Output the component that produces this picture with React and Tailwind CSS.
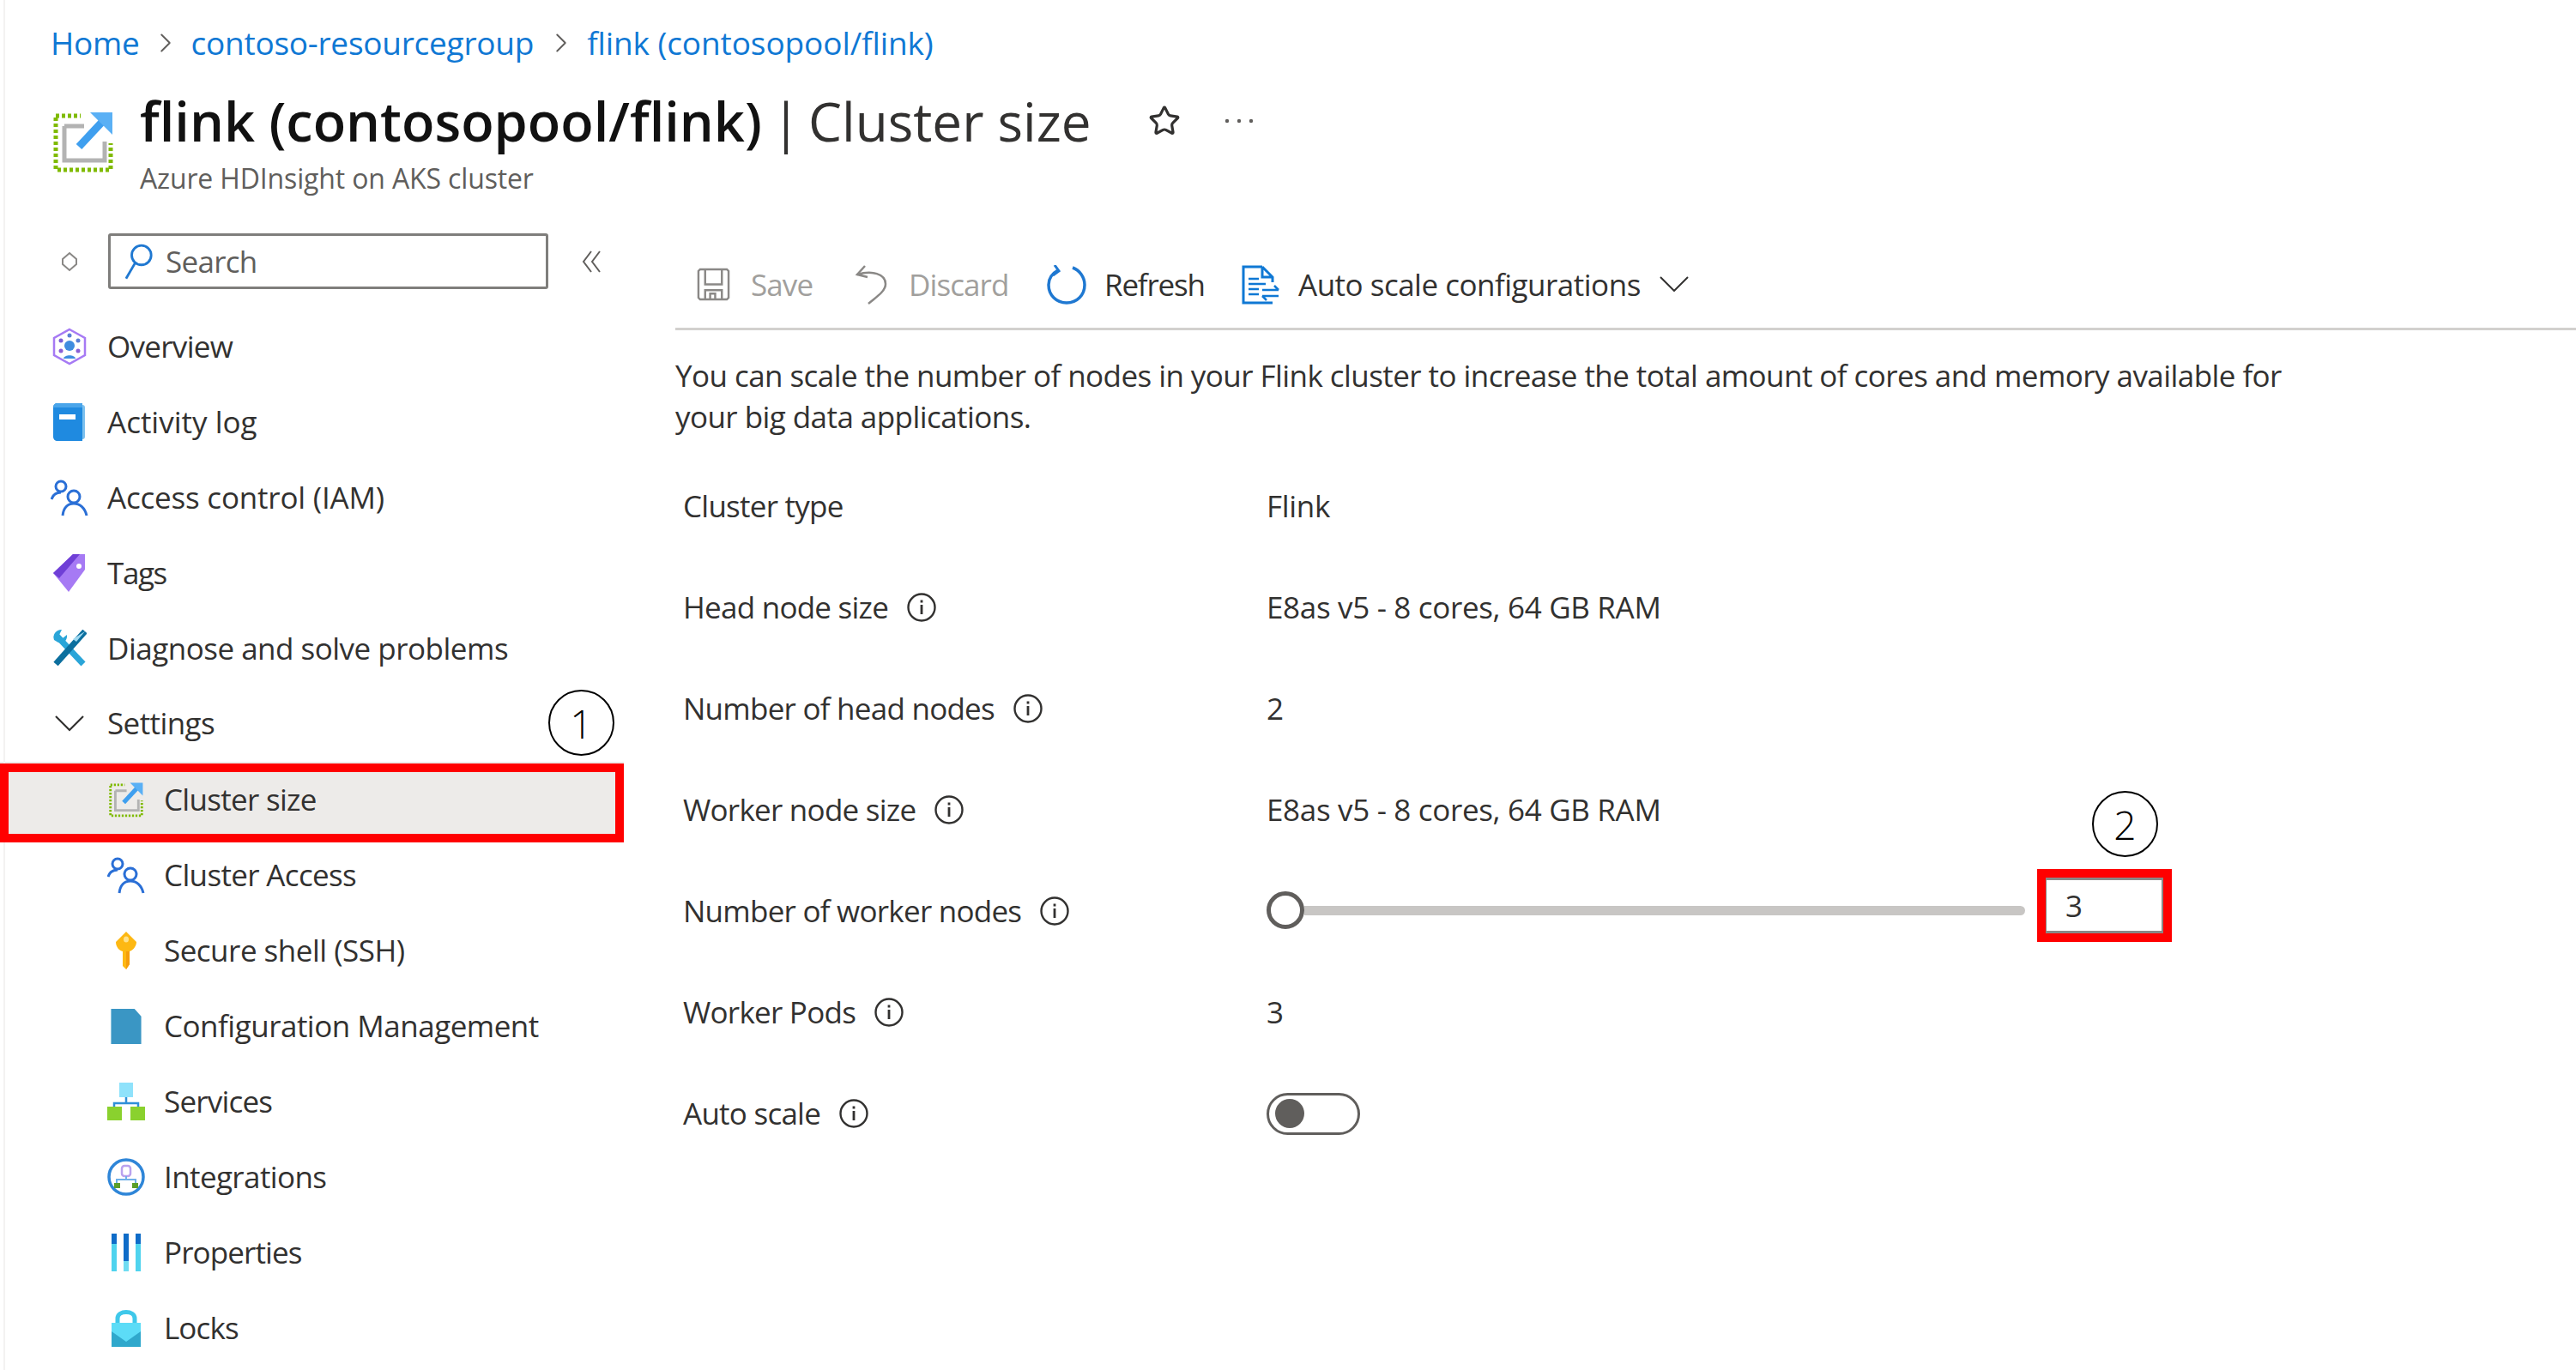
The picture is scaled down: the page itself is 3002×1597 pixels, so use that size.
import React from "react";
import { Star, ChevronRight } from "lucide-react";

const ClusterIcon = ({ className }) => (
  <svg viewBox="0 0 70 72" className={className}>
    <path d="M3 8V69H67V38" fill="none" stroke="#7fba00" strokeWidth="5" strokeDasharray="4 3" />
    <path d="M3 6H32" fill="none" stroke="#7fba00" strokeWidth="5" strokeDasharray="4 3" />
    <path d="M13 18H36M13 18V58H60V36" fill="none" stroke="#b3b3b3" strokeWidth="5" />
    <path d="M30 42L58 12" stroke="#3f9fef" strokeWidth="9" fill="none" />
    <path d="M43 2H69V28Z" fill="#5ab0f5" />
  </svg>
);

const PeopleIcon = ({ className }) => (
  <svg viewBox="0 0 44 44" className={className} fill="none" stroke="#2a6fd6" strokeWidth="3">
    <circle cx="12" cy="9" r="6" />
    <path d="M1 24C3 18 7 16 12 16" />
    <circle cx="27" cy="21" r="7" />
    <path d="M14 43C15 34 20 29 27 29C34 29 40 34 42 43" />
  </svg>
);

const Overview = () => (
  <svg viewBox="0 0 40 44" className="w-[40px] h-[44px]">
    <path d="M20 2L38 12V32L20 42L2 32V12Z" fill="none" stroke="#a67af4" strokeWidth="2.5" />
    <circle cx="20" cy="21" r="6" fill="#3f8ddf" />
    <circle cx="20" cy="9" r="2.5" fill="#5a7fd6" />
    <circle cx="10" cy="15" r="2.5" fill="#7a5fd6" />
    <circle cx="30" cy="15" r="2.5" fill="#5a7fd6" />
    <circle cx="10" cy="27" r="2.5" fill="#8a5fd6" />
    <circle cx="30" cy="27" r="2.5" fill="#8a5fd6" />
    <path d="M13 36C14 31 26 31 27 36Z" fill="#3f8ddf" />
  </svg>
);

const ActivityLog = () => (
  <svg viewBox="0 0 40 44" className="w-[40px] h-[44px]">
    <path d="M6 0H35V44H6C3 44 1 42 1 39V5C1 2 3 0 6 0Z" fill="#1f8ae0" />
    <path d="M35 2C37 2 38 3 38 5V39C38 41 37 42 35 42Z" fill="#7cc0ee" />
    <rect x="8" y="13" width="19" height="6" fill="#fff" />
    <path d="M6 0H35V5H1C1 2 3 0 6 0Z" fill="#4aa5ea" />
  </svg>
);

const Tag = () => (
  <svg viewBox="0 0 40 44" className="w-[40px] h-[44px]">
    <path d="M1 22L24 0H38V18L19 44Z" fill="#a67af4" />
    <path d="M1 22L24 0H32L8 28Z" fill="#6f3fd6" />
    <circle cx="31" cy="14" r="3" fill="#fff" />
  </svg>
);

const Wrench = () => (
  <svg viewBox="0 0 40 44" className="w-[40px] h-[44px]">
    <path d="M4 6L36 40" stroke="#2aa5d8" strokeWidth="7" />
    <path d="M38 2L4 40" stroke="#0c6f9e" strokeWidth="7" />
    <path d="M2 12C0 6 4 0 11 0L8 6L12 10L17 6C18 12 13 17 7 15Z" fill="#2aa5d8" />
    <path d="M38 2L28 14L24 11Z" fill="#9fd9f0" />
  </svg>
);

const Key = () => (
  <svg viewBox="0 0 26 44" className="w-[26px] h-[44px]">
    <path d="M13 0L25 12C25 18 20 22 17 23V38L13 44L9 40V23C5 22 1 18 1 12Z" fill="#fdb813" />
    <path d="M13 23H17V38L13 44Z" fill="#f59d0c" />
    <ellipse cx="13" cy="9" rx="3" ry="3.5" fill="#ffe28a" />
  </svg>
);

const Config = () => (
  <svg viewBox="0 0 36 42" className="w-[36px] h-[41px]">
    <path d="M0 0H28L36 9V42H0Z" fill="#3a96c4" />
  </svg>
);

const Services = () => (
  <svg viewBox="0 0 44 44" className="w-[44px] h-[44px]">
    <rect x="14" y="0" width="16" height="17" fill="#8fe2fb" />
    <path d="M22 17V24M8 30V24H36V30" fill="none" stroke="#2f8fd8" strokeWidth="2.5" />
    <rect x="0" y="28" width="17" height="16" fill="#8ad12e" />
    <rect x="27" y="28" width="17" height="16" fill="#8ad12e" />
  </svg>
);

const Integrations = () => (
  <svg viewBox="0 0 44 44" className="w-[44px] h-[44px]">
    <circle cx="22" cy="22" r="20" fill="#fff" stroke="#2f86d8" strokeWidth="3.5" />
    <rect x="17" y="9" width="10" height="12" rx="3" fill="#fff" stroke="#b9a2ee" strokeWidth="2.5" />
    <path d="M22 21V25M11 31V25H33V31" fill="none" stroke="#6fb0e8" strokeWidth="2" />
    <rect x="8" y="29" width="7" height="6" fill="#5b9e2a" />
    <rect x="29" y="29" width="7" height="6" fill="#5b9e2a" />
  </svg>
);

const Properties = () => (
  <svg viewBox="0 0 34 44" className="w-[34px] h-[44px]">
    <rect x="0" y="0" width="6" height="12" fill="#0f6cc8" />
    <rect x="0" y="12" width="6" height="32" fill="#4fd3ee" />
    <rect x="14" y="0" width="6" height="32" fill="#0f6cc8" />
    <rect x="14" y="32" width="6" height="12" fill="#6fdcf2" />
    <rect x="28" y="0" width="6" height="12" fill="#0f6cc8" />
    <rect x="28" y="12" width="6" height="32" fill="#4fd3ee" />
  </svg>
);

const Lock = () => (
  <svg viewBox="0 0 34 44" className="w-[34px] h-[44px]">
    <path d="M7 18V11C7 1 27 1 27 11V18" fill="none" stroke="#3fc8ea" strokeWidth="5" />
    <rect x="0" y="16" width="34" height="28" fill="#5cdcf7" />
    <path d="M0 44V26L17 38L34 26V44Z" fill="#2fa8cc" />
  </svg>
);

const Info = () => (
  <svg viewBox="0 0 34 34" className="w-[34px] h-[34px] ml-[22px] shrink-0" fill="none">
    <circle cx="17" cy="17" r="15.5" stroke="#323130" strokeWidth="2.4" />
    <rect x="15.6" y="14" width="2.8" height="11" fill="#323130" />
    <rect x="15.6" y="8.5" width="2.8" height="3" fill="#323130" />
  </svg>
);

const SettingsChevron = () => (
  <svg viewBox="0 0 36 20" className="w-[36px] h-[20px] mb-[2px]" fill="none" stroke="#323130" strokeWidth="2.2">
    <path d="M2 2L18 18L34 2" />
  </svg>
);

const sideTop = [
  ["Overview", <Overview />, "tracking-[-0.7px]"],
  ["Activity log", <ActivityLog />, "tracking-[0px]"],
  ["Access control (IAM)", <PeopleIcon className="w-[44px] h-[44px]" />, "tracking-[-0.2px]"],
  ["Tags", <Tag />, "tracking-[-1.4px]"],
  ["Diagnose and solve problems", <Wrench />, "tracking-[-0.5px]"],
  ["Settings", <SettingsChevron />, "tracking-[-0.6px] mb-[2px]"],
];

const sideSub = [
  ["Cluster Access", <PeopleIcon className="w-[44px] h-[44px]" />, "tracking-[-0.65px]"],
  ["Secure shell (SSH)", <Key />, "tracking-[-0.5px]"],
  ["Configuration Management", <Config />, "tracking-[-0.5px]"],
  ["Services", <Services />, "tracking-[-0.8px]"],
  ["Integrations", <Integrations />, "tracking-[-0.6px]"],
  ["Properties", <Properties />, "tracking-[-0.9px]"],
  ["Locks", <Lock />, "tracking-[-0.9px]"],
];

const SideRow = ({ icon, label, sub, selected, track }) => (
  <div className={`flex items-center h-[88px] ${selected ? "bg-[#edebe9]" : ""}`}>
    <div className={`flex items-center justify-center w-[44px] shrink-0 ${sub ? "ml-[125px]" : "ml-[59px]"}`}>{icon}</div>
    <span className={`ml-[22px] whitespace-nowrap ${track}`}>{label}</span>
  </div>
);

const Row = ({ label, info, children }) => (
  <div className="flex items-center h-[118px] pl-[9px]">
    <div className="flex items-center w-[680px] shrink-0">
      <span className="tracking-[-0.75px] whitespace-nowrap">{label}</span>
      {info && <Info />}
    </div>
    <div className="flex-1 flex items-center tracking-[-0.33px]">{children}</div>
  </div>
);

const ToolBtn = ({ w, icon, label, textClass = "", gap, track = "tracking-[-0.9px]" }) => (
  <div className={`flex items-center shrink-0 ${w} ${textClass}`}>
    {icon}
    <span className={`${gap} ${track} whitespace-nowrap`}>{label}</span>
  </div>
);

export default function App() {
  return (
    <div className="relative w-[3002px] h-[1597px] overflow-hidden bg-white text-[#323130] text-[35px] leading-[48px] font-['Open_Sans',sans-serif]">
      <div className="absolute left-[4px] top-0 bottom-0 w-[2px] bg-[#f3f2f1]"></div>

      <div className="flex items-center h-[100px] pl-[59px] text-[#0f78d4] text-[37px] tracking-[-0.25px]">
        <span>Home</span>
        <ChevronRight className="w-[38px] h-[38px] text-[#605e5c] ml-[11px]" strokeWidth={1.2} />
        <span className="ml-[11px]">contoso-resourcegroup</span>
        <ChevronRight className="w-[38px] h-[38px] text-[#605e5c] ml-[13px]" strokeWidth={1.2} />
        <span className="ml-[11px] tracking-[-0.1px]">flink (contosopool/flink)</span>
      </div>

      <div className="flex h-[172px] pl-[62px]">
        <ClusterIcon className="w-[70px] h-[72px] mt-[29px] shrink-0" />
        <div className="ml-[31px]">
          <div className="flex items-center h-[82px] text-[62px] leading-[82px] whitespace-nowrap">
            <span className="font-semibold text-[#111] text-[63px]">flink (contosopool/flink)</span>
            <span className="ml-[11px] text-[#323130]">|</span>
            <span className="ml-[9px] text-[#323130]">Cluster size</span>
            <Star className="w-[38px] h-[38px] ml-[66px] text-[#323130]" strokeWidth={2} />
            <svg viewBox="0 0 34 6" className="w-[34px] h-[6px] ml-[51px]" fill="#605e5c">
              <circle cx="3" cy="3" r="2.2" /><circle cx="17" cy="3" r="2.2" /><circle cx="31" cy="3" r="2.2" />
            </svg>
          </div>
          <div className="text-[32px] leading-[44px] mt-[4px] text-[#605e5c] tracking-[-0.15px]">Azure HDInsight on AKS cluster</div>
        </div>
      </div>

      <div className="flex">
        <aside className="w-[727px] shrink-0">
          <div className="flex items-center h-[65px] mb-[23px]">
            <svg viewBox="0 0 20 24" className="w-[20px] h-[24px] ml-[71px]" fill="none" stroke="#8a8886" strokeWidth="2">
              <path d="M10 2L18 9V15L10 22L2 15V9Z" />
            </svg>
            <div className="flex items-center w-[513px] h-[65px] ml-[35px] border-[3px] border-[#7f7e7c] rounded-[3px] pl-[16px] text-[#605e5c]">
              <svg viewBox="0 0 36 46" className="w-[34px] h-[44px]" fill="none" stroke="#1f78d1" strokeWidth="3">
                <circle cx="21" cy="15" r="12" />
                <path d="M13 25L2 44" />
              </svg>
              <span className="ml-[14px] tracking-[-0.7px]">Search</span>
            </div>
            <svg viewBox="0 0 24 30" className="w-[24px] h-[30px] ml-[38px]" fill="none" stroke="#605e5c" strokeWidth="2">
              <path d="M12 3L3 15L12 27M22 3L13 15L22 27" />
            </svg>
          </div>

          {sideTop.map(([label, icon, track]) => <SideRow key={label} label={label} icon={icon} track={track} />)}
          <SideRow label="Cluster size" icon={<ClusterIcon className="w-[40px] h-[42px]" />} sub selected track="tracking-[-0.7px]" />
          {sideSub.map(([label, icon, track]) => <SideRow key={label} label={label} icon={icon} track={track} sub />)}
        </aside>

        <main className="flex-1 pl-[60px]">
          <div className="flex items-center h-[113px] pt-[11px] pb-[2px] pl-[25px] border-b-[3px] border-[#d2d0ce]">
            <ToolBtn w="w-[184px]" textClass="text-[#a19f9d]" gap="ml-[24px]" label="Save" icon={
              <svg viewBox="0 0 40 40" className="w-[39px] h-[39px] shrink-0" fill="none" stroke="#8a8886" strokeWidth="2.5">
                <path d="M4 2H36L38 4V36L36 38H4L2 36V4Z" /><path d="M10 2V20H30V2" /><path d="M10 38V27H30V38" /><path d="M16 38V31H22V38" />
              </svg>} />
            <ToolBtn w="w-[224px]" textClass="text-[#a19f9d]" gap="ml-[25px]" label="Discard" icon={
              <svg viewBox="0 0 38 46" className="w-[38px] h-[46px] shrink-0" fill="none" stroke="#8a8886" strokeWidth="2.5">
                <path d="M12 1L3 11L15 14" /><path d="M3 11C20 6 36 10 36 22C36 31 24 38 16 45" />
              </svg>} />
            <ToolBtn w="w-[227px]" gap="ml-[21px]" track="tracking-[-1.2px]" label="Refresh" icon={
              <svg viewBox="0 0 46 46" className="w-[46px] h-[46px] shrink-0" fill="none" stroke="#1f78d1" strokeWidth="3.5">
                <path d="M13 6C4 11 2 18 2 23C2 35 11 44 23 44C35 44 44 35 44 23C44 14 38 6 30 3" />
                <path d="M9 0L14 7L7 12" strokeWidth="3" />
              </svg>} />
            <ToolBtn w="w-[487px]" gap="ml-[22px]" track="tracking-[-0.5px]" label="Auto scale configurations" icon={
              <svg viewBox="0 0 44 46" className="w-[44px] h-[46px] shrink-0" fill="none" stroke="#0f78d4" strokeWidth="3">
                <path d="M24 2H2V44H36" /><path d="M24 2L36 14V20M24 2V14H36" />
                <path d="M8 16H20M8 22H28M8 28H20M8 34H20" strokeWidth="2.5" />
                <path d="M24 29H43M38 24L43 29M43 36H24M29 41L24 36" strokeWidth="2.5" />
              </svg>} />
            <svg viewBox="0 0 34 18" className="w-[34px] h-[18px] mb-[2px] shrink-0" fill="none" stroke="#323130" strokeWidth="2">
              <path d="M1 1L17 17L33 1" />
            </svg>
          </div>

          <p className="mt-[29px] tracking-[-0.56px] whitespace-nowrap">
            You can scale the number of nodes in your Flink cluster to increase the total amount of cores and memory available for<br />
            your big data applications.
          </p>

          <div className="mt-[21px]">
            <Row label="Cluster type">Flink</Row>
            <Row label="Head node size" info>E8as v5 - 8 cores, 64 GB RAM</Row>
            <Row label="Number of head nodes" info>2</Row>
            <Row label="Worker node size" info>E8as v5 - 8 cores, 64 GB RAM</Row>
            <Row label="Number of worker nodes" info>
              <div className="w-[44px] h-[44px] mb-[2px] rounded-full border-[5px] border-[#605e5c] bg-white shrink-0"></div>
              <div className="w-[840px] h-[11px] mb-[2px] bg-[#c8c6c4] rounded-r-full shrink-0"></div>
              <div className="flex items-center w-[138px] h-[65px] ml-[23px] mb-[13px] pl-[22px] bg-white border-2 border-[#8a8886] border-t-[3px] border-b-[3px]">3</div>
            </Row>
            <Row label="Worker Pods" info>3</Row>
            <Row label="Auto scale" info>
              <div className="flex items-center w-[109px] h-[49px] rounded-full border-[3px] border-[#605e5c] pl-[7px]">
                <div className="w-[34px] h-[34px] rounded-full bg-[#605e5c]"></div>
              </div>
            </Row>
          </div>
        </main>
      </div>

      <div className="absolute left-0 top-[890px] w-[727px] h-[92px] border-[10px] border-[#ff0000]"></div>
      <div className="absolute left-[2374px] top-[1013px] w-[157px] h-[85px] border-[10px] border-[#ff0000]"></div>
      <div className="absolute left-[639px] top-[804px] w-[77px] h-[77px] rounded-full border-2 border-black flex items-center justify-center text-[46px] font-light text-black">1</div>
      <div className="absolute left-[2438px] top-[922px] w-[77px] h-[77px] rounded-full border-2 border-black flex items-center justify-center text-[46px] font-light text-black">2</div>
    </div>
  );
}
